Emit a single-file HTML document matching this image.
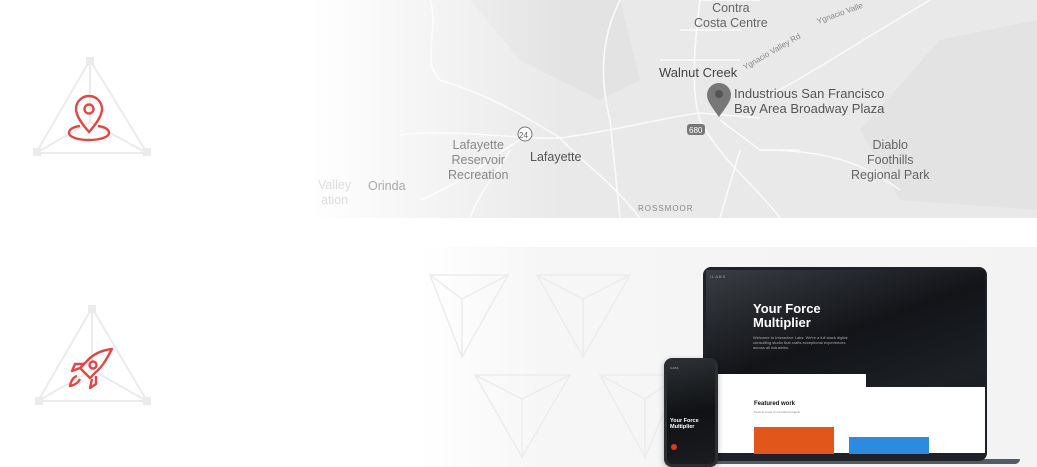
<!DOCTYPE html>
<html><head><meta charset="utf-8"><style>
*{margin:0;padding:0}
body{width:1037px;height:467px;overflow:hidden;background:#fff;position:relative;font-family:"Liberation Sans",sans-serif}
.abs{position:absolute}
.mt{position:absolute;font-size:12.5px;color:#666;line-height:15px;text-align:center}
</style></head><body>

<!-- icons -->
<svg class="abs" style="left:30px;top:54px" width="122" height="106" viewBox="0 0 122 106">
<g stroke="#ebebeb" stroke-width="2" fill="none"><path d="M60 6 L6 99 L117 99 Z"/><path d="M60 6 V68 M6 99 L60 68 L117 99"/></g>
<g fill="#ebebeb"><rect x="56" y="3" width="8" height="8"/><rect x="3" y="94" width="8" height="8"/><rect x="113" y="94" width="8" height="8"/></g>
<g stroke="#e04848" stroke-width="2.4" fill="none"><path d="M59 78 C52 70 46 62 46 55 A13 13 0 0 1 72 55 C72 62 66 70 59 78 Z"/><circle cx="59" cy="55" r="4.5"/><path d="M50 72 C42 73 39 76 39 79 C39 83 48 86 59 86 C70 86 79 83 79 79 C79 76 76 73 68 72"/></g>
</svg>
<svg class="abs" style="left:30px;top:302px" width="122" height="106" viewBox="0 0 122 106">
<g stroke="#ebebeb" stroke-width="2" fill="none"><path d="M62 6 L8 99 L117 99 Z"/><path d="M62 6 V68 M8 99 L62 68 L117 99"/></g>
<g fill="#ebebeb"><rect x="58" y="3" width="8" height="8"/><rect x="5" y="95" width="8" height="8"/><rect x="113" y="95" width="8" height="8"/></g>
<g stroke="#e04848" stroke-width="2.4" fill="none" stroke-linejoin="round"><path d="M82 47 C72 48 63 52 56 60 L50 66 L60 76 L66 70 C74 63 78 54 82 47 Z"/><circle cx="63" cy="63" r="3.5"/><path d="M54 62 L45 62 L42 69 L50 66 M66 74 L66 82 L60 86 L62 77"/><path d="M47 74 C43 75 41 79 40 84 C45 83 48 81 50 77"/></g>
</svg>

<!-- map -->
<svg class="abs" style="left:310px;top:0" width="727" height="218" viewBox="310 0 727 218">
<defs><linearGradient id="fade" x1="0" x2="1"><stop offset="0" stop-color="#fff" stop-opacity="1"/><stop offset="0.22" stop-color="#fff" stop-opacity="0.35"/><stop offset="0.35" stop-color="#fff" stop-opacity="0"/></linearGradient></defs>
<rect x="310" y="0" width="727" height="218" fill="#e9e9e9"/>
<g fill="#e3e3e3"><path d="M470 0 L620 0 L640 80 L600 100 L520 60 Z"/><path d="M940 40 L1037 20 L1037 210 L900 200 L860 130 Z"/></g>
<g stroke="#fafafa" fill="none" stroke-width="1.6">
<path d="M400 135 C450 128 520 140 560 138 C620 130 660 118 700 113 L760 118"/>
<path d="M700 0 C695 40 690 90 700 120 C720 160 760 190 780 218"/>
<path d="M620 0 C600 40 600 80 610 120 L620 218"/>
<path d="M760 100 C800 80 830 60 880 30 L930 0"/>
<path d="M430 0 C440 30 420 60 440 80 C470 90 500 100 560 138"/>
<path d="M420 200 C470 180 500 150 520 140 M470 218 C480 190 500 170 510 150"/>
<path d="M700 0 L760 0 M680 30 L740 30 M660 60 L740 60 M720 120 L760 150 L800 150 M740 150 L720 218"/>
<path d="M560 138 C580 160 610 180 640 218"/>
<path d="M760 150 C820 150 860 160 900 190"/>
</g>
<rect x="310" y="0" width="727" height="218" fill="url(#fade)"/>
<g font-family="Liberation Sans" font-size="10" fill="#666"><circle cx="525" cy="134" r="7" fill="#fff" stroke="#777"/><text x="519" y="138" font-size="8">24</text>
<rect x="687" y="124" width="18" height="11" rx="3" fill="#777"/><text x="689" y="133" font-size="8" fill="#fff">680</text>
<text x="745" y="70" font-size="8" fill="#888" transform="rotate(-30 745 70)">Ygnacio Valley Rd</text>
<text x="818" y="24" font-size="8" fill="#888" transform="rotate(-20 818 24)">Ygnacio Valle</text></g>
<path d="M719 117 C712 107 707 101 707 95 A12 12 0 0 1 731 95 C731 101 726 107 719 117 Z" fill="#777"/><circle cx="719" cy="94" r="4" fill="#555"/>
</svg>
<div class="mt" style="left:694px;top:1px">Contra<br>Costa Centre</div>
<div class="mt" style="left:659px;top:65px;color:#444;font-size:13px">Walnut Creek</div>
<div class="mt" style="left:734px;top:86px;text-align:left;font-size:13px;color:#555">Industrious San Francisco<br>Bay Area Broadway Plaza</div>
<div class="mt" style="left:448px;top:138px;color:#888">Lafayette<br>Reservoir<br>Recreation</div>
<div class="mt" style="left:530px;top:150px;color:#555">Lafayette</div>
<div class="mt" style="left:368px;top:179px;color:#aaa">Orinda</div>
<div class="mt" style="left:318px;top:178px;color:#ddd">Valley<br>ation</div>
<div class="mt" style="left:851px;top:138px">Diablo<br>Foothills<br>Regional Park</div>
<div class="mt" style="left:638px;top:201px;font-size:8px;letter-spacing:1px;color:#888">ROSSMOOR</div>

<!-- section 2 background -->
<div class="abs" style="left:420px;top:247px;width:617px;height:220px;background:linear-gradient(90deg,#fff,#f6f6f6 20%,#f3f3f3)"></div>
<svg class="abs" style="left:420px;top:247px" width="300" height="220" viewBox="0 0 300 220">
<g stroke="#ececec" stroke-width="1.5" fill="none">
<path d="M10 28 L88 28 L42 110 Z M42 52 L42 110 M10 28 L42 52 L88 28"/>
<path d="M117 28 L210 28 L163 110 Z M163 52 L163 110 M117 28 L163 52 L210 28"/>
<path d="M55 128 L150 128 L102 210 Z M102 152 L102 210 M55 128 L102 152 L150 128"/>
<path d="M180 128 L260 128 L225 210 Z M225 152 L225 210 M180 128 L225 152 L260 128"/>
</g></svg>

<!-- laptop -->
<div class="abs" style="left:700px;top:459px;width:320px;height:5px;background:#555b63;border-radius:0 0 6px 6px"></div>
<div class="abs" style="left:703px;top:267px;width:284px;height:194px;background:#1e2228;border-radius:8px"></div>
<div class="abs" style="left:706px;top:270px;width:279px;height:184px;background:linear-gradient(160deg,#3a3d42,#121418 40%,#1d2025 70%,#0f1114);overflow:hidden">
<div class="abs" style="left:0;top:104px;width:160px;height:80px;background:#fff"></div>
<div class="abs" style="left:0;top:117px;width:279px;height:67px;background:#fff"></div>
<div class="abs" style="left:0;top:183px;width:279px;height:4px;background:#1a1d22"></div>
<div class="abs" style="left:4px;top:4px;font-size:4px;color:#aaa;letter-spacing:1px">ILABS</div>
<div class="abs" style="left:47px;top:32px;font-size:13px;color:#fff;line-height:14px;font-weight:bold">Your Force<br>Multiplier</div>
<div class="abs" style="left:47px;top:65px;width:100px;font-size:4px;color:#aaa;line-height:5px">Welcome to Interactive Labs. We're a full stack digital consulting studio that crafts exceptional experiences across all industries.</div>
<div class="abs" style="left:48px;top:131px;font-size:6px;color:#111;font-weight:bold">Featured work</div>
<div class="abs" style="left:48px;top:140px;font-size:3px;color:#888">Peek at a few of our latest projects</div>
<div class="abs" style="left:48px;top:157px;width:80px;height:27px;background:#e0561b"></div>
<div class="abs" style="left:143px;top:167px;width:80px;height:17px;background:#2a8be0"></div>
</div>
<!-- phone -->
<div class="abs" style="left:664px;top:358px;width:54px;height:109px;background:#2a2d31;border-radius:8px;box-shadow:0 2px 6px rgba(0,0,0,.3)"></div>
<div class="abs" style="left:667px;top:362px;width:48px;height:102px;background:linear-gradient(170deg,#2c2f33,#0f1114 50%,#1a1c20);border-radius:6px;overflow:hidden">
<div class="abs" style="left:3px;top:4px;font-size:3px;color:#aaa">ILABS</div>
<div class="abs" style="left:3px;top:56px;font-size:5.5px;color:#fff;font-weight:bold;line-height:6px">Your Force<br>Multiplier</div>
<div class="abs" style="left:4px;top:82px;width:6px;height:6px;background:#e03a1a;border-radius:50%"></div>
</div>
</body></html>
